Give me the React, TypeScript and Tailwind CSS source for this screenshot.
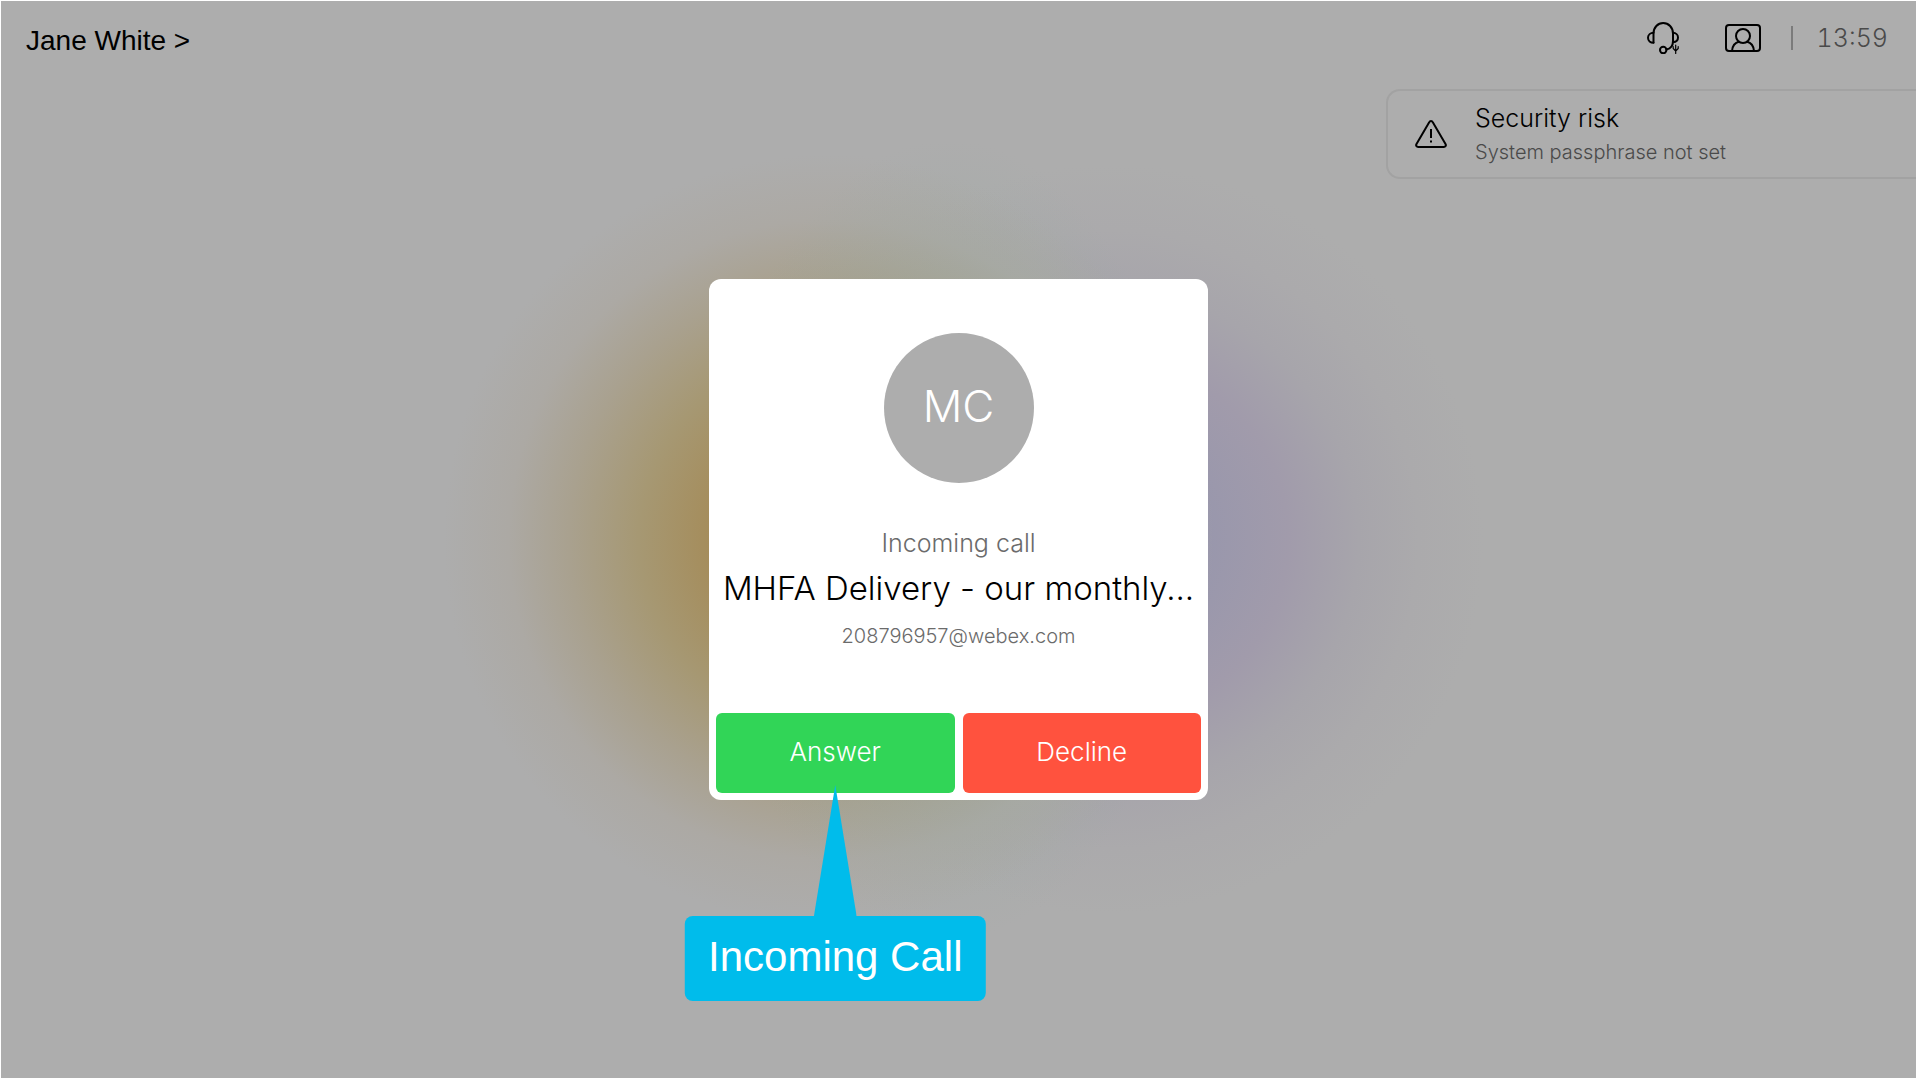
import React from "react";

function HeadsetIcon() {
  return (
    <svg className="h-8 w-8" viewBox="0 0 32 32" fill="none" stroke="#000" strokeWidth="2" strokeLinecap="round" strokeLinejoin="round" aria-hidden="true">
      <path d="M6.500 20.500V11.500C6.500 5.500 10.800 1 16.200 1s9.800 4.500 9.800 10.500V19c0 4.500-2 7.600-6.500 8.600" />
      <path d="M6.500 10.800C3.500 10.800 1 12.800 1 15.800s2.500 5 5.500 5M26 10.800c2.800 0 5 2 5 4.700s-2.200 4.500-5 4.700" />
      <circle cx="16.200" cy="28" r="3.200" />
      <path strokeWidth="1.200" d="M28.700 31.400V23M26.200 24.500v2l2.500 2.500 2.500-2.500v-2" />
    </svg>
  );
}

function PersonIcon() {
  return (
    <svg className="h-7 w-9" viewBox="0 0 36 28" fill="none" stroke="#000" strokeWidth="2" strokeLinecap="round" aria-hidden="true">
      <rect x="1" y="1" width="34" height="26" rx="3" />
      <circle cx="18" cy="12" r="7" />
      <path d="M7 27c.5-5.500 3.500-8.500 7-9.200M29 27c-.5-5.500-3.500-8.500-7-9.200" />
    </svg>
  );
}

function WarningIcon() {
  return (
    <svg className="h-7 w-8" viewBox="0 0 32 28" fill="none" stroke="#000" strokeWidth="2" strokeLinejoin="round" aria-hidden="true">
      <path d="M14.200 2.200 1.500 24c-.9 1.500 0 3 1.700 3h25.600c1.700 0 2.600-1.500 1.700-3L17.800 2.200c-.8-1.500-2.800-1.500-3.600 0Z" />
      <path d="M16 9v9M16 20.500v2" />
    </svg>
  );
}

export default function App() {
  return (
    <div className="min-h-screen bg-white p-px font-['Inter',sans-serif] text-black">
      <div className="relative flex min-h-[calc(100vh-2px)] flex-col overflow-hidden bg-[#adadad]">
        <div
          aria-hidden="true"
          className="absolute inset-0 bg-[radial-gradient(240px_400px_at_calc(50%_-_10px)_50%,#94a89f80_0%,#94a89f66_50%,#a0aaa600_100%),radial-gradient(circle_at_calc(50%_-_130px)_50%,#a58a4c_0px,#a58d5c_120px,#a69873_190px,#a9a18f_260px,#aca9a4_320px,#adadad00_385px),radial-gradient(circle_at_calc(50%_+_150px)_50%,#9695ad_0px,#9997ac_100px,#a19bab_180px,#a7a5ab_250px,#abaaac_310px,#adadad00_375px)]"
        />
        <header className="relative flex items-center justify-between pt-4 pr-7 pl-[25px]">
          <a href="#profile" className="pt-1 font-['Liberation_Sans',sans-serif] text-[28px] leading-10">Jane White &gt;</a>
          <div className="flex items-center pb-0.5">
            <HeadsetIcon />
            <span className="ml-[46px]"><PersonIcon /></span>
            <span className="ml-[30px] h-6 w-0.5 bg-[#7b7b7b]" />
            <time className="ml-6 text-[25px] leading-10 font-light text-[#4a4a4a] tabular-nums">13:59</time>
          </div>
        </header>
        <aside className="relative mt-7 flex h-[90px] w-[530px] items-center self-end rounded-l-[14px] border-2 border-r-0 border-[#a2a2a2] pl-[27px]">
          <WarningIcon />
          <div className="ml-7">
            <h2 className="text-[25px] leading-9 font-[350]">Security risk</h2>
            <p className="text-xl leading-8 font-light text-[#4a4a4a]">System passphrase not set</p>
          </div>
        </aside>

        <div className="absolute inset-0 flex items-center justify-center">
          <section role="dialog" aria-label="Incoming call" className="flex w-[499px] flex-col items-center rounded-xl bg-white p-[7px] pt-[54px]">
            <div className="flex size-[150px] items-center justify-center rounded-full bg-[#adadad] pb-1 text-[44px] font-light text-white">MC</div>
            <p className="mt-[42px] text-[25px] leading-9 font-light text-[#6b6b6b]">Incoming call</p>
            <h1 className="mt-0.5 text-[33px] leading-[50px] font-[350] whitespace-nowrap">MHFA Delivery - our monthly...</h1>
            <p className="mt-[7px] text-xl leading-8 font-light text-[#6b6b6b]">208796957@webex.com</p>
            <div className="mt-[61px] grid w-full grid-cols-2 gap-2">
              <div className="relative">
                <button className="h-20 w-full rounded-md bg-[#31d557] pb-1 text-[26px] font-light text-white">Answer</button>
                <div className="absolute top-[72px] left-1/2 flex -translate-x-1/2 flex-col items-center">
                  <svg className="h-[132px] w-[43px]" viewBox="0 0 43 132" aria-hidden="true">
                    <path d="M21.500 0 43 132H0Z" fill="#00bceb" />
                  </svg>
                  <div className="-mt-px rounded-lg bg-[#00bceb] px-[23px] pt-[17px] pb-5 font-['Liberation_Sans',sans-serif] text-[42px] leading-[48px] whitespace-nowrap text-white">Incoming Call</div>
                </div>
              </div>
              <button className="h-20 rounded-md bg-[#ff523e] pb-1 text-[26px] font-light text-white">Decline</button>
            </div>
          </section>
        </div>
      </div>
    </div>
  );
}
